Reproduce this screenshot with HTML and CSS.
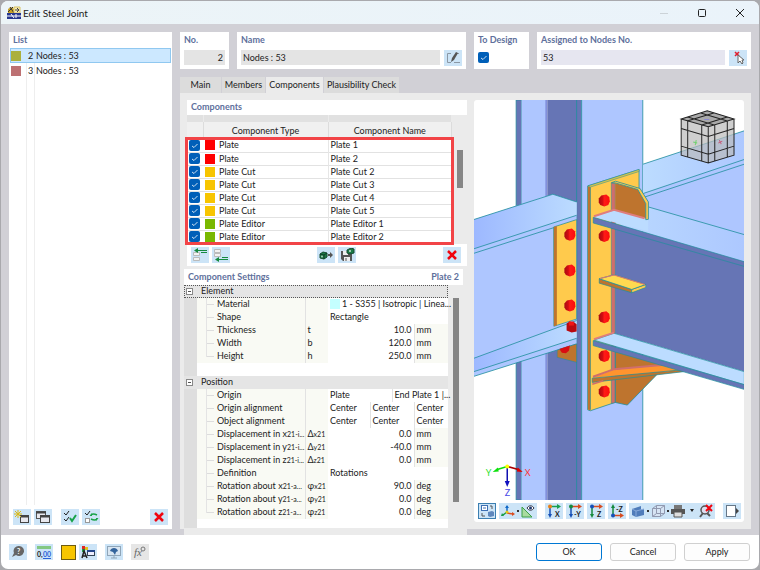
FILE: index.html
```html
<!DOCTYPE html>
<html lang="en">
<head>
    <meta charset="UTF-8">
    <meta name="viewport" content="width=device-width, initial-scale=1.0">
    <title>Edit Steel Joint</title>
    <link rel="stylesheet" href="styles.css">
</head>
<body>
<div class="window">
    <header class="titlebar">
        <svg class="app-icon" width="14" height="14" viewBox="0 0 14 14">
            <path d="M1 3l3-2 3 2v4H1z" fill="#c9a227"/><path d="M3 1l4 6M6 1L1 6" stroke="#333"/>
            <path d="M7 1h6v6H7z" fill="#f7ecb5" stroke="#d8c262"/><path d="M8 4h4M10 2l2 2-2 2" stroke="#444" fill="none"/>
            <path d="M0 7h14v6H0z" fill="#26378f"/><path d="M0 10h14M4 8l3 4M9 8v4" stroke="#fff"/>
        </svg>
        <h1>Edit Steel Joint</h1>
        <div class="window-buttons">
            <button aria-label="Minimize"><svg width="10" height="10" viewBox="0 0 10 10"><path d="M1 5.500h8" stroke="#ccd3d8"/></svg></button>
            <button aria-label="Maximize"><svg width="10" height="10" viewBox="0 0 10 10"><rect x="1.500" y="1.500" width="7" height="7" rx="1" fill="none" stroke="#222"/></svg></button>
            <button aria-label="Close"><svg width="10" height="10" viewBox="0 0 10 10"><path d="M1 1l8 8M9 1l-8 8" stroke="#222"/></svg></button>
        </div>
    </header>

    <main class="content">
        <!-- Joint list -->
        <section class="panel list-panel">
            <h2>List</h2>
            <ul class="joints">
                <li class="selected"><span class="swatch olive"></span><span class="num">2</span><span class="joint-name">Nodes : 53</span></li>
                <li><span class="swatch rose"></span><span class="num">3</span><span class="joint-name">Nodes : 53</span></li>
            </ul>
            <div class="list-tools">
                <button class="tool" aria-label="New"><svg width="16" height="14" viewBox="0 0 16 14"><rect x="6.500" y="5.500" width="8" height="7" fill="#e8e8ee" stroke="#444"/><path d="M6 6.500h9" stroke="#444" stroke-width="2"/><path d="M4 0v8M0 4h8M1 1l6 6M7 1L1 7" stroke="#d9b91c"/></svg></button>
                <button class="tool" aria-label="Copy"><svg width="16" height="14" viewBox="0 0 16 14"><rect x="1.500" y="1.500" width="9" height="7" fill="#e8e8ee" stroke="#555"/><path d="M1 2.500h10" stroke="#444" stroke-width="2"/><rect x="5.500" y="5.500" width="9" height="7" fill="#e8e8ee" stroke="#444"/><path d="M5 6.500h10" stroke="#444" stroke-width="2"/></svg></button>
                <button class="tool spaced" aria-label="Check all"><svg width="16" height="14" viewBox="0 0 16 14"><path d="M2 3l2 2 3-4M2 9l2 2 3-4" fill="none" stroke="#222"/><path d="M8 8l2 3 4-6" fill="none" stroke="#18a34a" stroke-width="2"/></svg></button>
                <button class="tool" aria-label="Invert checks"><svg width="16" height="14" viewBox="0 0 16 14"><path d="M2 3l2 2 3-4" fill="none" stroke="#222"/><rect x="2.500" y="8.500" width="4" height="4" fill="#fff" stroke="#999"/><path d="M8 5c2-2 4-1 6 0M14 9c-2 2-4 1-6 0" fill="none" stroke="#18a34a" stroke-width="1.500"/><path d="M9 3v3H6.500zM13 11V8h2.500z" fill="#18a34a"/></svg></button>
                <button class="tool push" aria-label="Delete"><svg width="16" height="14" viewBox="0 0 16 14"><path d="M4 3l8 8M12 3l-8 8" stroke="#f00510" stroke-width="2.500"/></svg></button>
            </div>
        </section>

        <section class="editor">
            <div class="fields">
                <div class="panel field no-field">
                    <label for="no">No.</label>
                    <input id="no" type="text" value="2" readonly>
                </div>
                <div class="panel field name-field">
                    <label for="name">Name</label>
                    <div class="field-row">
                        <input id="name" type="text" value="Nodes : 53" readonly>
                        <button class="tool" aria-label="Edit name"><svg width="16" height="14" viewBox="0 0 16 14"><path d="M6 2.500H2.500v9H6M9 11.500h6M12 2.500h2" fill="none" stroke="#8b98a5"/><path d="M6 11l1-4 4-6 2 1-4 7z" fill="#555"/></svg></button>
                    </div>
                </div>
                <div class="panel field design-field">
                    <label for="design">To Design</label>
                    <input id="design" class="check" type="checkbox" checked>
                </div>
                <div class="panel field assigned-field">
                    <label for="nodes">Assigned to Nodes No.</label>
                    <div class="field-row">
                        <input id="nodes" type="text" value="53">
                        <button class="tool" aria-label="Pick nodes"><svg width="16" height="14" viewBox="0 0 16 14"><path d="M5 1l4 4M9 1L5 5" stroke="#e02030" stroke-width="1.500"/><path d="M8 4v8l2-2 2 3 1-1-1-3h2z" fill="#fff" stroke="#666"/></svg></button>
                    </div>
                </div>
            </div>

            <div class="tabs" role="tablist">
                <button role="tab" class="tab-main">Main</button>
                <button role="tab" class="tab-members">Members</button>
                <button role="tab" class="tab-components active" aria-selected="true">Components</button>
                <button role="tab" class="tab-check">Plausibility Check</button>
            </div>

            <div class="tab-body">
                <div class="left">
                    <section class="components">
                        <h2>Components</h2>
                        <div class="table-area">
                            <table class="component-table">
                                <colgroup><col class="c-check"><col class="c-color"><col class="c-type"><col></colgroup>
                                <thead>
                                    <tr class="strip"><td></td><td colspan="2"></td><td></td></tr>
                                    <tr><th></th><th colspan="2">Component Type</th><th>Component Name</th></tr>
                                </thead>
                                <tbody>
                                    <tr><td><input class="check" type="checkbox" aria-label="Plate 1" checked></td><td><span class="swatch red"></span></td><td>Plate</td><td>Plate 1</td></tr>
                                    <tr><td><input class="check" type="checkbox" aria-label="Plate 2" checked></td><td><span class="swatch red"></span></td><td>Plate</td><td>Plate 2</td></tr>
                                    <tr><td><input class="check" type="checkbox" aria-label="Plate Cut 2" checked></td><td><span class="swatch yellow"></span></td><td>Plate Cut</td><td>Plate Cut 2</td></tr>
                                    <tr><td><input class="check" type="checkbox" aria-label="Plate Cut 3" checked></td><td><span class="swatch yellow"></span></td><td>Plate Cut</td><td>Plate Cut 3</td></tr>
                                    <tr><td><input class="check" type="checkbox" aria-label="Plate Cut 4" checked></td><td><span class="swatch yellow"></span></td><td>Plate Cut</td><td>Plate Cut 4</td></tr>
                                    <tr><td><input class="check" type="checkbox" aria-label="Plate Cut 5" checked></td><td><span class="swatch yellow"></span></td><td>Plate Cut</td><td>Plate Cut 5</td></tr>
                                    <tr><td><input class="check" type="checkbox" aria-label="Plate Editor 1" checked></td><td><span class="swatch green"></span></td><td>Plate Editor</td><td>Plate Editor 1</td></tr>
                                    <tr><td><input class="check" type="checkbox" aria-label="Plate Editor 2" checked></td><td><span class="swatch green"></span></td><td>Plate Editor</td><td>Plate Editor 2</td></tr>
                                </tbody>
                            </table>
                            <div class="scroll"><div class="thumb"></div></div>
                        </div>
                        <div class="component-tools">
                            <button class="tool" aria-label="Insert before"><svg width="16" height="14" viewBox="0 0 16 14"><path d="M1.500 4.500h6v3h-6zM1.500 9.500h6v3h-6z" fill="#f2f2f2" stroke="#bbb"/><path d="M4 2.500h11M9 4.500h6" stroke="#168a3e"/><path d="M6 0v5L2 2.500z" fill="#168a3e"/></svg></button>
                            <button class="tool" aria-label="Insert after"><svg width="16" height="14" viewBox="0 0 16 14"><path d="M1.500 1.500h6v3h-6zM1.500 5.500h6v3h-6z" fill="#f2f2f2" stroke="#bbb"/><path d="M4 11.500h11M9 9.500h6" stroke="#168a3e"/><path d="M6 9v5l-4-2.500z" fill="#168a3e"/></svg></button>
                            <button class="tool push-mid" aria-label="Load component"><svg width="16" height="14" viewBox="0 0 16 14"><path d="M2 6l3-2 4 1v4l-3 2-4-1z" fill="#1c7a46" stroke="#164c31"/><path d="M2 6l4 1 3-2M6 7v4" fill="none" stroke="#0e3c26"/><circle cx="4" cy="8.500" r="1" fill="#a6cdb6"/><path d="M10 7h2" stroke="#555" stroke-width="2"/><path d="M12 4l3 3-3 3z" fill="#555"/></svg></button>
                            <button class="tool" aria-label="Save component"><svg width="16" height="14" viewBox="0 0 16 14"><path d="M2 3h11v10H4l-2-2z" fill="#555"/><path d="M4 3h5v4H4zM5 9h6v4H5z" fill="#eee"/><path d="M7 10v3" stroke="#555"/><path d="M8 2l4-2 3 1v4l-4 1-3-1z" fill="#1c7a46" stroke="#164c31"/><circle cx="11" cy="3" r="1" fill="#cde5d6"/></svg></button>
                            <button class="tool push" aria-label="Delete component"><svg width="16" height="14" viewBox="0 0 16 14"><path d="M4 3l8 8M12 3l-8 8" stroke="#f00510" stroke-width="2.500"/></svg></button>
                        </div>
                    </section>

                    <section class="settings">
                        <h2>Component Settings <span>Plate 2</span></h2>
                        <div class="settings-area">
                            <table class="settings-table">
                                <colgroup><col class="s-gutter"><col class="s-name"><col class="s-symbol"><col class="s-a"><col class="s-b"><col class="s-b"><col></colgroup>
                                <tbody>
                                    <tr class="group focused"><td><button class="fold" aria-label="Collapse Element"></button></td><th colspan="6">Element</th></tr>
                                    <tr><td></td><th>Material</th><td></td><td colspan="4"><span class="swatch cyan"></span>1 - S355 | Isotropic | Linea...</td></tr>
                                    <tr><td></td><th>Shape</th><td></td><td colspan="4">Rectangle</td></tr>
                                    <tr><td></td><th>Thickness</th><td>t</td><td class="value" colspan="3">10.0</td><td class="unit">mm</td></tr>
                                    <tr><td></td><th>Width</th><td>b</td><td class="value" colspan="3">120.0</td><td class="unit">mm</td></tr>
                                    <tr class="last"><td></td><th>Height</th><td>h</td><td class="value" colspan="3">250.0</td><td class="unit">mm</td></tr>
                                    <tr class="blank"><td></td><td colspan="6"></td></tr>
                                    <tr class="group"><td><button class="fold" aria-label="Collapse Position"></button></td><th colspan="6">Position</th></tr>
                                    <tr><td></td><th>Origin</th><td></td><td colspan="2">Plate</td><td class="split" colspan="2">End Plate 1 |...</td></tr>
                                    <tr><td></td><th>Origin alignment</th><td></td><td>Center</td><td class="split" colspan="2">Center</td><td class="split">Center</td></tr>
                                    <tr><td></td><th>Object alignment</th><td></td><td>Center</td><td class="split" colspan="2">Center</td><td class="split">Center</td></tr>
                                    <tr><td></td><th>Displacement in x<small>21-i...</small></th><td>Δ<small>x21</small></td><td class="value" colspan="3">0.0</td><td class="unit">mm</td></tr>
                                    <tr><td></td><th>Displacement in y<small>21-i...</small></th><td>Δ<small>y21</small></td><td class="value" colspan="3">-40.0</td><td class="unit">mm</td></tr>
                                    <tr><td></td><th>Displacement in z<small>21-i...</small></th><td>Δ<small>z21</small></td><td class="value" colspan="3">0.0</td><td class="unit">mm</td></tr>
                                    <tr><td></td><th>Definition</th><td></td><td colspan="4">Rotations</td></tr>
                                    <tr><td></td><th>Rotation about x<small>21-a...</small></th><td>φ<small>x21</small></td><td class="value" colspan="3">90.0</td><td class="unit">deg</td></tr>
                                    <tr><td></td><th>Rotation about y<small>21-a...</small></th><td>φ<small>y21</small></td><td class="value" colspan="3">0.0</td><td class="unit">deg</td></tr>
                                    <tr class="last"><td></td><th>Rotation about z<small>21-a...</small></th><td>φ<small>z21</small></td><td class="value" colspan="3">0.0</td><td class="unit">deg</td></tr>
                                    <tr class="blank end"><td></td><td colspan="6"></td></tr>
                                </tbody>
                            </table>
                            <div class="scroll"><div class="thumb"></div></div>
                        </div>
                    </section>
                </div>

                <!-- 3D view -->
                <section class="viewer">
                    <svg class="scene" viewBox="474 100 270 399" preserveAspectRatio="xMidYMid slice" role="img" aria-label="Steel joint model">
                        <defs>
                            <linearGradient id="flange" x1="0" x2="1"><stop offset="0" stop-color="#9db8ff"/><stop offset="1" stop-color="#bcdcff"/></linearGradient>
                            <linearGradient id="flange2" x1="0" x2="1"><stop offset="0" stop-color="#bcdcff"/><stop offset="1" stop-color="#adc8ff"/></linearGradient>
                            <linearGradient id="bolt" x1="0" x2="1"><stop offset="0" stop-color="#a80b12"/><stop offset=".35" stop-color="#d30c12"/><stop offset=".5" stop-color="#ff1a16"/><stop offset="1" stop-color="#fa0d0d"/></linearGradient>
                            <g id="bolt-head"><path d="M-5.500-2L-3-5 2-6 5-3.500 5.500 1 4 4.500 0 6-4 4.500-5.500 2z" fill="url(#bolt)"/></g>
                        </defs>
                        <!-- column -->
                        <path d="M516.300 100h5.500v399h-5.500z" fill="#6675b5" stroke="#1f8f9c" stroke-width=".7"/>
                        <path d="M521.800 100H547v399h-25.200z" fill="#aec6ff"/>
                        <path d="M545.500 100h2v399h-2z" fill="#8290dc"/>
                        <path d="M547.500 100h34.200v399h-34.200z" fill="#6675b5"/>
                        <path d="M581.700 100h61v399h-61z" fill="#aec6ff"/>
                        <path d="M576.700 100v399M581.700 100v399M642.700 100v399" stroke="#1f8f9c" stroke-width=".8"/>
                        <!-- left beam -->
                        <path d="M474 219.300l79-25.300 23.700 7.700v141.600L474 375.700z" fill="#aec6ff"/>
                        <path d="M474 219.300l79-25.300 23.700 7.700V215L474 248.500z" fill="url(#flange)"/>
                        <path d="M474 357.700L576.700 320v17.700L474 371z" fill="url(#flange)"/>
                        <path d="M474 219.300l79-25.300 23.700 7.700M474 248.500L576.700 215M474 253l102.700-33M474 357.700L576.700 320M474 371l102.700-33.300M474 375.700l102.700-32.400" fill="none" stroke="#1f8f9c" stroke-width=".8"/>
                        <path d="M557.300 349.500l19.400-6.200v18.400l-19.400-5z" fill="#be742e" stroke="#1f8f9c" stroke-width=".5"/>
                        <path d="M553.700 226.700l23-7.400v99.200l-22.700 7.200z" fill="#ffca4c" stroke="#1f8f9c" stroke-width=".7"/>
                        <path d="M554 226.700l3-1v99l-3 1z" fill="#be742e"/>
                        <use href="#bolt-head" x="570" y="234.300"/><use href="#bolt-head" x="570" y="270"/><use href="#bolt-head" x="570" y="305"/>
                        <path d="M566.700 323l3-2 5 1 2 2v7l-5 1-5-2z" fill="#b90a10"/><path d="M569 321h5v4h-5z" fill="#f21414"/>
                        <path d="M559.500 348.500l10.500-3.500-1 5-3 2.500-4-.5z" fill="#d90d12"/>
                        <!-- rear right beam -->
                        <path d="M643 164l101-33.300V270L643 240z" fill="#aec6ff"/>
                        <path d="M643 164l101-33.300v28.600L643 193.300z" fill="url(#flange2)"/>
                        <path d="M643 164l101-33.300M643 193.300l101-34M644 197l100-33" stroke="#1f8f9c" stroke-width=".8"/>
                        <!-- end plate -->
                        <path d="M587.700 185.700l51.300-16.400V210l-24 20v171.700l-24.700 8.300-2.600-1z" fill="#ffca4c" stroke="#1f8f9c" stroke-width=".8"/>
                        <path d="M588 186l2.500 1v222.500l-2.500-.7z" fill="#be742e"/>
                        <path d="M588 185.700l51-16.400v2l-48.500 15.500z" fill="#d9c34e" stroke="#1f8f9c" stroke-width=".5"/>
                        <path d="M590.500 187v222" stroke="#1f8f9c" stroke-width=".6"/>
                        <!-- front beam -->
                        <path d="M615.300 224L744 262v109l-128.700-38z" fill="#6675b5"/>
                        <path d="M594 216.700l20-6.700 34-3.500 96 27.800V261.300z" fill="url(#flange2)"/>
                        <path d="M648.300 206.700l95.700 27.600" stroke="#1f8f9c" stroke-width=".8"/>
                        <path d="M611.300 182.500l4 1v218.200l-4 1z" fill="#cf6e6c" stroke="#1f8f9c" stroke-width=".5"/>
                        <path d="M594 216.700l20-6.700 34 8.500V231z" fill="#bcdcff"/>
                        <path d="M593.300 217L744 261.300v4.700l-150.700-43.300z" fill="#6675b5" stroke="#1f8f9c" stroke-width=".7"/>
                        <path d="M615.300 182.700l22.400 6.600 8 14v15l-30.400-8.300z" fill="#be742e"/>
                        <path d="M611.500 182.500l4-1.500 24.500 7.300 8.300 13.400V219l-2.600.4v-16.100l-8-14-22.400-6.600z" fill="#ffca4c" stroke="#1f8f9c" stroke-width=".8"/>
                        <path d="M594 216l20-6.500 30.500 8.500" fill="none" stroke="#df7d7d" stroke-width="2"/>
                        <!-- small plate -->
                        <path d="M599.300 278.300l32.400 10.700v3.300l-32.400-9.600z" fill="#be742e" stroke="#1f8f9c" stroke-width=".7"/>
                        <path d="M631.700 289l14-5v3l-14 5.300z" fill="#ffca4c" stroke="#1f8f9c" stroke-width=".7"/>
                        <path d="M599.300 278.300l14.700-4 31.700 9.700-14 5z" fill="#ffda50" stroke="#1f8f9c" stroke-width=".8"/>
                        <path d="M600 278l14-3.500 31 9.500" fill="none" stroke="#d87773"/>
                        <!-- lower stiffener -->
                        <path d="M615.300 350l50 14-9.600 11-28.400 29.300-12-2.600z" fill="#be742e" stroke="#1f8f9c" stroke-width=".8"/>
                        <path d="M592.300 377l21.700-8 56-5.500 13.300 6z" fill="#ff942e"/>
                        <path d="M593 376l21-7.500 56-5" fill="none" stroke="#cf6e6c" stroke-width="2"/>
                        <path d="M592.300 377.500l91-8.500v2l-91 10.700z" fill="#be742e" stroke="#1f8f9c" stroke-width=".7"/>
                        <path d="M592.300 383.500l11-3.500" stroke="#cf6e6c" stroke-width="1.500"/>
                        <!-- bottom flange -->
                        <path d="M594 339.500l20-6.800L744 371v13z" fill="#bcdcff" stroke="#1f8f9c" stroke-width=".7"/>
                        <path d="M593.300 340L744 384v4.700L593.300 345z" fill="#6675b5" stroke="#1f8f9c" stroke-width=".7"/>
                        <path d="M594 338.500l20-6.500" stroke="#df7d7d" stroke-width="2"/>
                        <use href="#bolt-head" x="604.300" y="200.300"/><use href="#bolt-head" x="604.300" y="235.700"/><use href="#bolt-head" x="604.300" y="316.700"/><use href="#bolt-head" x="604.300" y="355.300"/><use href="#bolt-head" x="604.300" y="390.700"/>
                        <!-- view cube -->
                        <path d="M681 119l26-8.300 26.700 8.300v36l-25.700 7.700-27-7.700z" fill="#bbb" fill-opacity=".7"/>
                        <path d="M681 119l26-8.300 26.700 8.300-25.700 7.700z" fill="#999" fill-opacity=".7"/>
                        <path d="M681 119l26-8.300 26.700 8.300-25.700 7.700zM681 119v36l27 7.700 25.700-7.700v-36M708 126.700v36M687.500 121v36M701.500 125v36M714.500 125v36M727 121v36M681 128.500l27 8 25.700-8M681 146l27 8 25.700-8M687.500 117l26.500 8M700.500 113l26.500 8M713.500 113L687 121M727 117l-25.500 8" fill="none" stroke="#222" stroke-width="1"/>
                        <path d="M693 142l4 1M696 140l-1 5" stroke="#6fd16f"/><path d="M718 143l4-2M719 140l2 4" stroke="#c55a78"/><path d="M704 119.500h5" stroke="#8888d0"/>
                        <!-- axes -->
                        <path d="M507.500 465.500l-10 3" stroke="#0be00b" stroke-width="1.500"/><path d="M493 471l5-4.500 1 4z" fill="#0be00b"/>
                        <path d="M507.500 465.500l11 3" stroke="#a00" stroke-width="1.500"/><path d="M523 471l-6-.500 1-4z" fill="#d00"/>
                        <path d="M507.500 466v15" stroke="#1010b0" stroke-width="1.500"/><path d="M505 480h5l-2.500 6z" fill="#1010c0"/>
                        <circle cx="507.500" cy="465.500" r="2" fill="#ff0"/>
                        <text x="486" y="475" fill="#2be02b">Y</text><text x="525" y="475" fill="#f33">X</text><text x="505" y="495" fill="#4a4ae8">Z</text>
                    </svg>
                    <div class="view-tools">
                        <button class="tool pressed" aria-label="Navigation"><svg width="16" height="14" viewBox="0 0 16 14"><rect x="2.500" y="1.500" width="6" height="5" fill="#fff" stroke="#3d6fb3"/><path d="M4 4h3" stroke="#3d6fb3"/><path d="M9 8l4-1 2 1v4l-4 1-2-1z" fill="#5e87bd"/><path d="M11 2h2v3M6 12H3V9" fill="none" stroke="#555"/></svg></button>
                        <div class="tool-group">
                            <button class="tool" aria-label="Axes"><svg width="16" height="14" viewBox="0 0 16 14"><path d="M7 8V2" stroke="#1269c7" stroke-width="1.500"/><path d="M5 4l2-3 2 3z" fill="#1269c7"/><path d="M7 8l-4 3" stroke="#179b42" stroke-width="1.500"/><path d="M7 9l6 1" stroke="#e05020" stroke-width="1.500"/><path d="M12 8l3 2-3 2z" fill="#d84c20"/><path d="M1 12l1-3 2 3z" fill="#179b42"/><circle cx="7" cy="8" r="1.500" fill="#e4c818"/></svg></button>
                            <span class="dot"></span>
                            <button class="tool" aria-label="Measure"><svg width="16" height="14" viewBox="0 0 16 14"><path d="M2 3l10 10H2z" fill="#a9dba0" stroke="#3ba04b"/><path d="M7 4c2-3 5-3 7 0-2 3-5 3-7 0z" fill="#fff" stroke="#334"/><circle cx="10.500" cy="4" r="1.500" fill="#223a70"/></svg></button>
                        </div>
                        <button class="tool" aria-label="View X"><svg width="16" height="14" viewBox="0 0 16 14"><path d="M4 3v8" stroke="#1550b8" stroke-width="1.500"/><path d="M2 10h4l-2 4z" fill="#1550b8"/><path d="M4 2.500h8" stroke="#18a050" stroke-width="1.500"/><path d="M11 0l4 2.500L11 5z" fill="#18a050"/><circle cx="4" cy="2.500" r="2" fill="#e88018"/><text x="9" y="13">X</text></svg></button>
                        <button class="tool" aria-label="View minus Y"><svg width="16" height="14" viewBox="0 0 16 14"><path d="M4 3v8" stroke="#1550b8" stroke-width="1.500"/><path d="M2 10h4l-2 4z" fill="#1550b8"/><path d="M4 2.500h8" stroke="#d84c20" stroke-width="1.500"/><path d="M11 0l4 2.500L11 5z" fill="#d84c20"/><circle cx="4" cy="2.500" r="2" fill="#168a3e"/><text x="7" y="13">-Y</text></svg></button>
                        <button class="tool" aria-label="View Z"><svg width="16" height="14" viewBox="0 0 16 14"><path d="M4 3v8" stroke="#168a3e" stroke-width="1.500"/><path d="M2 10h4l-2 4z" fill="#168a3e"/><path d="M4 2.500h8" stroke="#d84c20" stroke-width="1.500"/><path d="M11 0l4 2.500L11 5z" fill="#d84c20"/><circle cx="4" cy="2.500" r="2" fill="#1550b8"/><text x="9" y="13">Z</text></svg></button>
                        <button class="tool" aria-label="View minus Z"><svg width="16" height="14" viewBox="0 0 16 14"><path d="M4 3v8" stroke="#168a3e" stroke-width="1.500"/><path d="M2 4h4L4 0z" fill="#168a3e"/><path d="M4 11.500h8" stroke="#d84c20" stroke-width="1.500"/><path d="M11 9l4 2.500-4 2.500z" fill="#d84c20"/><circle cx="4" cy="11.500" r="2" fill="#1550b8"/><text x="7" y="8">-Z</text></svg></button>
                        <div class="tool-group">
                            <button class="tool" aria-label="Display style"><svg width="16" height="14" viewBox="0 0 16 14"><path d="M2 5l9-3v4l3-1v6l-8 2-4-2z" fill="#4f7cba"/><path d="M2 5l4 2 8-2M6 7v6" stroke="#88aadb" fill="none"/></svg></button>
                            <span class="dot"></span>
                            <button class="tool" aria-label="Wireframe"><svg width="16" height="14" viewBox="0 0 16 14"><path d="M2.500 4.500h8v8h-8zM6.500 1.500h8v8h-8zM2.500 4.500l4-3M10.500 4.500l4-3M10.500 12.500l4-3M2.500 12.500l4-3" fill="#dfe3f2" fill-opacity=".5" stroke="#9199b0"/></svg></button>
                            <span class="dot"></span>
                            <button class="tool" aria-label="Print"><svg width="16" height="14" viewBox="0 0 16 14"><path d="M4 1h8v4H4z" fill="#777"/><path d="M1 5h14v5H1z" fill="#555"/><path d="M4 8h8v5H4z" fill="#ddd" stroke="#555"/></svg></button>
                            <button class="drop" aria-label="Print options"><svg width="6" height="4" viewBox="0 0 6 4"><path d="M1 0h4L3 3z" fill="#222"/></svg></button>
                            <button class="tool" aria-label="Reset zoom"><svg width="16" height="14" viewBox="0 0 16 14"><circle cx="7" cy="6" r="4" fill="#dde" stroke="#555" stroke-width="1.500"/><path d="M5 9l-3 4M9 9l3 3" stroke="#555" stroke-width="2"/><path d="M8 1l6 6M14 1L8 7" stroke="#f00510" stroke-width="2"/></svg></button>
                        </div>
                        <button class="tool push" aria-label="Side panel"><svg width="16" height="14" viewBox="0 0 16 14"><rect x="2.500" y="1.500" width="9" height="11" fill="#fff" stroke="#678"/><path d="M12 4l3 3-3 3z" fill="#444"/></svg></button>
                    </div>
                </section>
            </div>
        </section>
    </main>

    <footer class="footer">
        <button class="tool" aria-label="Help"><svg width="16" height="14" viewBox="0 0 16 14"><path d="M9 1a5 5 0 1 1-3 9l-4 2 2-4A5 5 0 0 1 9 1z" fill="#666"/><text x="7" y="9" class="light">?</text></svg></button>
        <button class="tool" aria-label="Units"><svg width="16" height="14" viewBox="0 0 16 14"><path d="M1 1h14v3H1z" fill="#83c883"/><text x="1" y="12">0,</text><text x="7" y="12" class="blue">00</text><path d="M7 13.500h8" stroke="#2a62d8"/></svg></button>
        <button class="color-box" aria-label="Colour"></button>
        <button class="tool" aria-label="Display properties"><svg width="16" height="14" viewBox="0 0 16 14"><path d="M2 1h3v3H2z" fill="#e02828"/><path d="M5 2h3v3H5z" fill="#e0c020"/><path d="M2 4h3v3H2z" fill="#22a048"/><path d="M2 13l2-7 3 7M3 11h3" fill="none" stroke="#222" stroke-width="1.500"/><rect x="7.500" y="5.500" width="7" height="5" fill="#eef" stroke="#345"/><path d="M7 6h8" stroke="#23458c" stroke-width="2"/></svg></button>
        <button class="tool" aria-label="View"><svg width="16" height="14" viewBox="0 0 16 14"><rect x="1.500" y="1.500" width="13" height="9" fill="#d9e6f2" stroke="#8fa5b8"/><path d="M8 10v3M5 13h6" stroke="#8fa5b8"/><path d="M4 6c1-4 7-4 8 0l-2 1-1 3-2-3z" fill="#34649c"/></svg></button>
        <button class="tool gray" aria-label="Formula"><svg width="16" height="14" viewBox="0 0 16 14"><text x="2" y="11" class="formula">fx</text><circle cx="11" cy="4" r="2" fill="none" stroke="#777"/></svg></button>
        <div class="actions">
            <button class="ok">OK</button>
            <button>Cancel</button>
            <button>Apply</button>
        </div>
    </footer>
</div>
</body>
</html>
```

FILE: styles.css
```css
* {
    box-sizing: border-box;
}
body {
    margin: 0;
    height: 100vh;
    padding: 1px;
    background: #a9a9ad;
    font-family: Lato, "Open Sans", sans-serif;
    font-size: 9px;
    line-height: 12px;
    color: #222;
}
button, input {
    font: inherit;
    color: inherit;
    margin: 0;
    padding: 0;
    border: 0;
}
h1, h2 {
    margin: 0;
}
h2, label {
    font-size: 9px;
    line-height: 14px;
    font-weight: 700;
    color: #60709c;
}
svg {
    display: block;
}
svg text {
    font-size: 7px;
    font-weight: 700;
    fill: #222;
}
svg text.light {
    fill: #fff;
}
svg text.blue {
    fill: #2a62d8;
}
svg text.formula {
    font: italic 11px "Liberation Serif", serif;
    fill: #666;
}

/* Window */
.window {
    display: flex;
    flex-direction: column;
    height: 100%;
    border-radius: 7px;
    overflow: hidden;
    background: #fff;
}
.titlebar {
    display: flex;
    align-items: center;
    height: 23px;
    padding: 0 14px 0 6px;
    background: linear-gradient(90deg, #ecf4f7, #eaf3fa);
}
.titlebar h1 {
    margin-left: 2px;
    font-size: 10px;
    font-weight: 400;
}
.window-buttons {
    display: flex;
    gap: 28px;
    margin-left: auto;
}
.window-buttons button {
    background: none;
}
.content {
    flex: 1;
    min-height: 0;
    display: grid;
    grid-template-columns: 163px 1fr;
    gap: 8px;
    padding: 8px 8px 6px;
    background: #d1d0d6;
}
.panel {
    background: #fff;
}

/* Buttons with icons */
.tool {
    display: flex;
    align-items: center;
    justify-content: center;
    flex: none;
    width: 18px;
    height: 16px;
    background: #cce4f7;
}
.tool.gray {
    background: #e6e6e6;
}
.tool.pressed {
    border: 1px solid #3c7fb1;
}
.push {
    margin-left: auto;
}

/* List */
.list-panel {
    display: flex;
    flex-direction: column;
    padding: 0 1px 3px;
}
.list-panel h2 {
    padding-left: 3px;
    line-height: 16px;
}
.joints {
    flex: 1;
    margin: 0;
    padding: 0;
    list-style: none;
    background: linear-gradient(#eee, #eee) 16px 0 / 1px 100% no-repeat, linear-gradient(#eee, #eee) 24px 0 / 1px 100% no-repeat;
}
.joints li {
    display: flex;
    align-items: center;
    height: 15px;
    border: 1px solid transparent;
}
.joints .selected {
    background: #cce8ff;
    border-color: #90c8f0;
}
.joints .num {
    width: 14px;
    padding-left: 7px;
}
.joints .joint-name {
    padding-left: 1px;
}
.list-tools {
    display: flex;
    gap: 3px;
    padding: 4px 3px 1px;
}
.list-tools .spaced {
    margin-left: 6px;
}

.swatch {
    display: block;
    width: 10px;
    height: 10px;
}
.olive { background: #abb03d; }
.rose { background: #bd7173; }
.red { background: #f00; }
.yellow { background: #f7c500; }
.green { background: #79b800; }
.cyan { background: #c4ffff; }

/* Top fields */
.editor {
    display: flex;
    flex-direction: column;
    min-width: 0;
    min-height: 0;
}
.fields {
    display: flex;
    gap: 8px;
}
.field {
    display: flex;
    flex-direction: column;
    height: 37px;
    padding: 1px 4px 3px;
}
.field label {
    height: 17px;
}
.field input[type="text"] {
    width: 100%;
    height: 15px;
    padding: 0 2px;
    background: #e4e4e4;
}
.field-row {
    display: flex;
    gap: 4px;
}
.no-field { width: 49px; }
.no-field input[type="text"] { text-align: right; }
.name-field { width: 229px; }
.design-field { width: 55px; }
.assigned-field { flex: 1; }
.assigned-field input[type="text"] { background: #e6e6f0; }
.check {
    appearance: none;
    display: block;
    width: 11px;
    height: 11px;
    border-radius: 2px;
    background: #005fb8 url('data:image/svg+xml,<svg xmlns="http://www.w3.org/2000/svg" viewBox="0 0 11 11"><path d="M3 6l2 1.500L8.500 4" fill="none" stroke="white" stroke-width=".8"/></svg>');
}
.design-field .check {
    margin-top: 2px;
}

/* Tabs */
.tabs {
    display: flex;
    gap: 1px;
    margin-top: 8px;
}
.tabs button {
    height: 16px;
    background: #dcdcdc;
}
.tabs .active {
    background: #ebebeb;
}
.tab-main { width: 41px; }
.tab-members { width: 43px; }
.tab-components { width: 57px; }
.tab-check { width: 75px; }
.tab-body {
    flex: 1;
    min-height: 0;
    display: grid;
    grid-template-columns: 283px 1fr;
    gap: 7px;
    padding: 7px 7px 0 4px;
    background: #ebebeb;
}
.left {
    display: flex;
    flex-direction: column;
    min-height: 0;
    box-shadow: 0 6px #ebebeb;
}

/* Components table */
.components {
    margin-left: 3px;
    background: #fff;
}
.components h2 {
    height: 15px;
    padding-left: 4px;
}
table {
    border-collapse: collapse;
    table-layout: fixed;
}
td, th {
    padding: 0 2px;
    font-weight: 400;
    white-space: nowrap;
}
.table-area, .settings-area {
    display: flex;
    align-items: flex-start;
    background: #ebebeb;
}
.component-table {
    width: 265px;
    background: #fff;
}
.c-check { width: 16px; }
.c-color { width: 14px; }
.c-type { width: 111px; }
.component-table .strip {
    height: 7px;
    line-height: 6px;
    background: #e1e1e1;
}
.component-table thead th {
    height: 17px;
    background: #f0f0f0;
    border-right: 1px solid #dcdcdc;
}
.component-table .strip td {
    border-right: 1px solid #ebebeb;
}
.component-table tbody {
    outline: 3px solid #f24447;
    outline-offset: -1px;
}
.component-table tbody tr {
    height: 13px;
    border-bottom: 1px solid #e2e2e2;
}
.component-table tbody td + td + td {
    border-right: 1px solid #e6e6e6;
}
.scroll {
    flex: 1;
    padding-left: 5px;
}
.thumb {
    width: 6px;
    background: #868686;
}
.table-area .thumb {
    height: 38px;
    margin-top: 35px;
}
.component-tools {
    display: flex;
    gap: 3px;
    padding: 3px 6px 3px 4px;
}
.push-mid {
    margin-left: 84px;
}

/* Settings */
.settings {
    flex: 1;
    display: flex;
    flex-direction: column;
    min-height: 0;
    margin: 3px 4px 0 0;
    background: #fff;
}
.settings h2 {
    display: flex;
    justify-content: space-between;
    height: 16px;
    line-height: 16px;
    padding: 0 4px;
}
.settings-area {
    flex: 1;
}
.settings-table {
    width: 264px;
    background: #fff;
}
.s-gutter { width: 13px; }
.s-name { width: 108px; }
.s-symbol { width: 23px; }
.s-a { width: 42px; }
.s-b { width: 22px; }
.settings-table tr {
    height: 13px;
}
.settings-table .end {
    height: 9px;
    line-height: 7px;
}
.settings-table tr td:first-child {
    padding: 0;
    background: #dedede;
}
.settings-table th {
    padding: 0 0 0 20px;
    overflow: hidden;
    text-align: left;
    background: linear-gradient(#ddd, #ddd) 10px 6px / 7px 1px no-repeat, linear-gradient(#e4e4e4, #e4e4e4) 9px 0 / 1px 100% no-repeat, #f9faf4;
}
.settings-table .last th {
    background: linear-gradient(#ddd, #ddd) 10px 6px / 7px 1px no-repeat, linear-gradient(#e4e4e4, #e4e4e4) 9px 0 / 1px 7px no-repeat, #f9faf4;
}
.settings-table th + td {
    background: #f9faf4;
    border-left: 1px solid #e2e2e2;
}
.settings-table .group th {
    padding-left: 4px;
    background: #e5e5e5;
}
.settings-table .group td:first-child {
    background: #e5e5e5;
}
.settings-table .focused {
    outline: 1px dotted #555;
    outline-offset: -1px;
}
.settings-table .value {
    text-align: right;
}
.settings-table .unit {
    background: #f9faf4;
    border-left: 1px solid #e2e2e2;
}
.settings-table .split {
    border-left: 1px solid #e2e2e2;
    padding-right: 0;
}
.settings-table .swatch {
    display: inline-block;
    margin-right: 2px;
    vertical-align: top;
    margin-top: 1px;
}
.settings-table small {
    font-size: 7px;
}
.fold {
    display: block;
    width: 7px;
    height: 7px;
    margin-left: 2px;
    border: 1px solid #888;
    background: linear-gradient(#555, #555) 1px 2px / 3px 1px no-repeat, #fff;
}
.settings-area .thumb {
    height: 204px;
    margin-top: 13px;
}

/* 3D view */
.viewer {
    display: flex;
    flex-direction: column;
    min-width: 0;
    min-height: 0;
    margin-bottom: 7px;
    border-radius: 3px;
    overflow: hidden;
    background: #fff;
}
.scene {
    flex: 1;
    min-height: 0;
    width: 100%;
}
.scene text {
    font-size: 9px;
    font-weight: 400;
    fill: revert-layer;
}
.view-tools {
    display: flex;
    align-items: center;
    gap: 3px;
    height: 22px;
    padding: 0 4px;
}
.tool-group {
    display: flex;
    align-items: center;
    margin-right: 5px;
    background: #cce4f7;
}
.dot {
    width: 2px;
    height: 2px;
    background: #333;
}
.drop {
    display: flex;
    align-items: center;
    justify-content: center;
    width: 10px;
    height: 16px;
    background: #cce4f7;
}

/* Footer */
.footer {
    display: flex;
    align-items: center;
    height: 34px;
    padding: 0 9px 0 8px;
    gap: 8px;
}
.color-box {
    width: 15px;
    height: 15px;
    border: 1px solid #6e5c10;
    background: #f7c500;
}
.color-box + .tool {
    margin-left: -5px;
}
.actions {
    display: flex;
    gap: 8px;
    margin-left: auto;
}
.actions button {
    width: 66px;
    height: 18px;
    border: 1px solid #d0d0d0;
    border-radius: 3px;
    background: #fdfdfd;
}
.actions .ok {
    border-color: #0078d4;
}
```
